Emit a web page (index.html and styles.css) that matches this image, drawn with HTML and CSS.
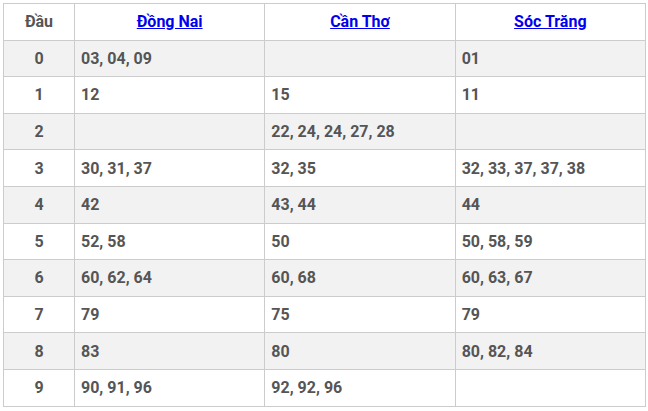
FILE: index.html
```html
<!DOCTYPE html>
<html lang="vi">
<head>
<meta charset="utf-8">
<link rel="stylesheet" href="styles.css">
</head>
<body>
<div class="wrap">
<table class="loto">
<colgroup><col class="c-head"><col class="c-prov"><col class="c-prov"><col class="c-prov"></colgroup>
<thead>
<tr><th>Đầu</th><th><a href="#">Đồng Nai</a></th><th><a href="#">Cần Thơ</a></th><th><a href="#">Sóc Trăng</a></th></tr>
</thead>
<tbody>
<tr><td class="k">0</td><td>03, 04, 09</td><td></td><td>01</td></tr>
<tr><td class="k">1</td><td>12</td><td>15</td><td>11</td></tr>
<tr><td class="k">2</td><td></td><td>22, 24, 24, 27, 28</td><td></td></tr>
<tr><td class="k">3</td><td>30, 31, 37</td><td>32, 35</td><td>32, 33, 37, 37, 38</td></tr>
<tr><td class="k">4</td><td>42</td><td>43, 44</td><td>44</td></tr>
<tr><td class="k">5</td><td>52, 58</td><td>50</td><td>50, 58, 59</td></tr>
<tr><td class="k">6</td><td>60, 62, 64</td><td>60, 68</td><td>60, 63, 67</td></tr>
<tr><td class="k">7</td><td>79</td><td>75</td><td>79</td></tr>
<tr><td class="k">8</td><td>83</td><td>80</td><td>80, 82, 84</td></tr>
<tr><td class="k">9</td><td>90, 91, 96</td><td>92, 92, 96</td><td></td></tr>
</tbody>
</table>
</div>
</body>
</html>
```
FILE: styles.css
```css
html, body { margin: 0; padding: 0; background: #fff; }
.wrap { padding: 3px; }
.loto {
  width: 643px;
  border-collapse: collapse;
  table-layout: fixed;
  font-family: Roboto, "Noto Sans", sans-serif;
  font-weight: bold;
  font-size: 16px;
  color: #555;
}
.c-head { width: 71px; }
.loto th, .loto td {
  border: 1px solid #ccc;
  height: 36.6px;
  padding: 0 6px;
  box-sizing: border-box;
  text-align: left;
  vertical-align: middle;
}
.loto th { text-align: center; background: #fff; }
.loto th a { color: #0000ee; text-decoration: underline; }
.loto td.k { text-align: center; }
.loto tbody tr:nth-child(odd) td { background: #f2f2f2; }
```
